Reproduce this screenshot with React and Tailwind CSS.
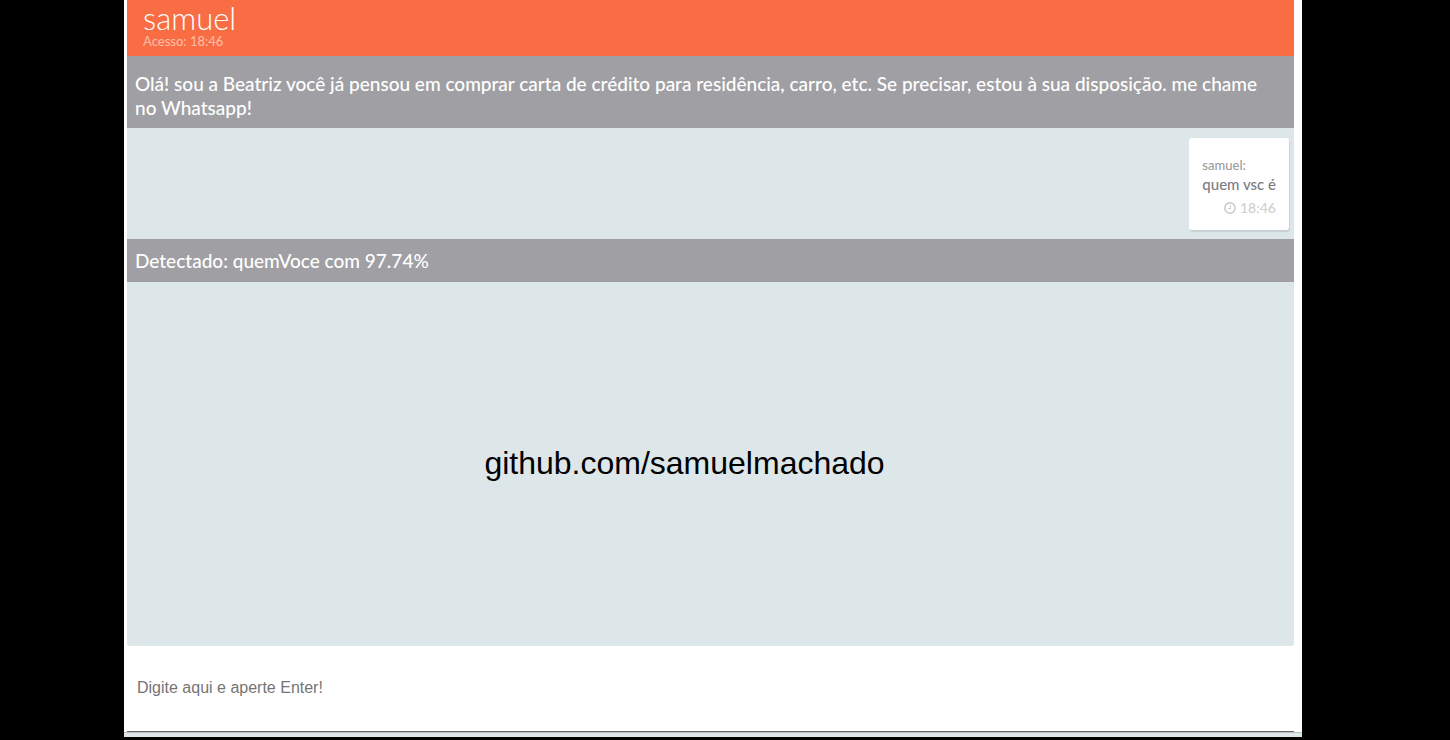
function ClockIcon() {
  return (
    <svg aria-hidden="true" className="h-3 w-3" viewBox="0 128 1536 1536" fill="currentColor">
      <path d="M896 544v448q0 14-9 23t-23 9h-320q-14 0-23-9t-9-23v-64q0-14 9-23t23-9h224v-352q0-14 9-23t23-9h64q14 0 23 9t9 23zm416 352q0-148-73-273t-198-198-273-73-273 73-198 198-73 273 73 273 198 198 273 73 273-73 198-198 73-273zm224 0q0 209-103 385.500t-279.500 279.500-385.500 103-385.500-103-279.500-279.500-103-385.500 103-385.500 279.500-279.500 385.500-103 385.500 103 279.500 279.500 103 385.500z" />
    </svg>
  );
}

function BotMessage({ className, children }) {
  return (
    <p className={"bg-[#a09fa3] pr-5 pl-2 text-[19px] leading-6 font-medium text-white " + className}>
      {children}
    </p>
  );
}

function UserMessage({ name, text, time }) {
  return (
    <article className="mr-[5px] self-end rounded-[3px] bg-white px-[13px] pt-[17px] pb-3 font-medium shadow-[1px_2px_1px_#c9d0d3]">
      <h2 className="text-[13px] leading-5 font-medium text-[#9b9b9f]">{name}:</h2>
      <p className="text-[15px] leading-[18px] text-[#7b7b7f]">{text}</p>
      <p className="flex items-center justify-end gap-1 pt-[5px] text-sm leading-5 text-[#cfcfd2]">
        <ClockIcon />
        <time>{time}</time>
      </p>
    </article>
  );
}

export default function App() {
  return (
    <div className="min-h-screen bg-black pr-[148px] pb-[3px] pl-[124px] font-['Lato',sans-serif]">
      <div className="flex min-h-[calc(100vh-3px)] flex-col bg-white">
        <main className="mr-2 ml-[3px] flex flex-1 flex-col">
          <header className="h-14 bg-[#f86d43] px-4">
            <h1 className="text-[31px] leading-9 font-light text-white">samuel</h1>
            <p className="text-[13px] leading-[10px] font-medium text-[#fcbba5]">Acesso: 18:46</p>
          </header>
          <section className="flex flex-1 flex-col rounded-b-[2px] bg-[#dde6e8]">
            <BotMessage className="pt-4 pb-2">
              Olá! sou a Beatriz você já pensou em comprar carta de crédito para residência, carro,
              etc. Se precisar, estou à sua disposição. me chame no Whatsapp!
            </BotMessage>
            <div className="flex flex-col pt-[10px] pb-[9px]">
              <UserMessage name="samuel" text="quem vsc é" time="18:46" />
            </div>
            <BotMessage className="pt-[10px] pb-[9px]">Detectado: quemVoce com 97.74%</BotMessage>
            <div className="flex flex-1 items-center justify-center pr-[52px] pb-[3px]">
              <p className="font-['Liberation_Sans',sans-serif] text-[32px] leading-9 text-black">
                github.com/samuelmachado
              </p>
            </div>
          </section>
          <input
            type="text"
            aria-label="Mensagem"
            placeholder="Digite aqui e aperte Enter!"
            className="h-[86px] w-full border-b border-[#6b696b] bg-white px-[10px] pb-[2px] font-['Liberation_Sans',sans-serif] text-base text-[#757575] outline-none placeholder:text-[#757575]"
          />
        </main>
        <footer className="h-[5px] border-t border-[#b9bdbe] bg-[#dde6e8]" />
      </div>
    </div>
  );
}
